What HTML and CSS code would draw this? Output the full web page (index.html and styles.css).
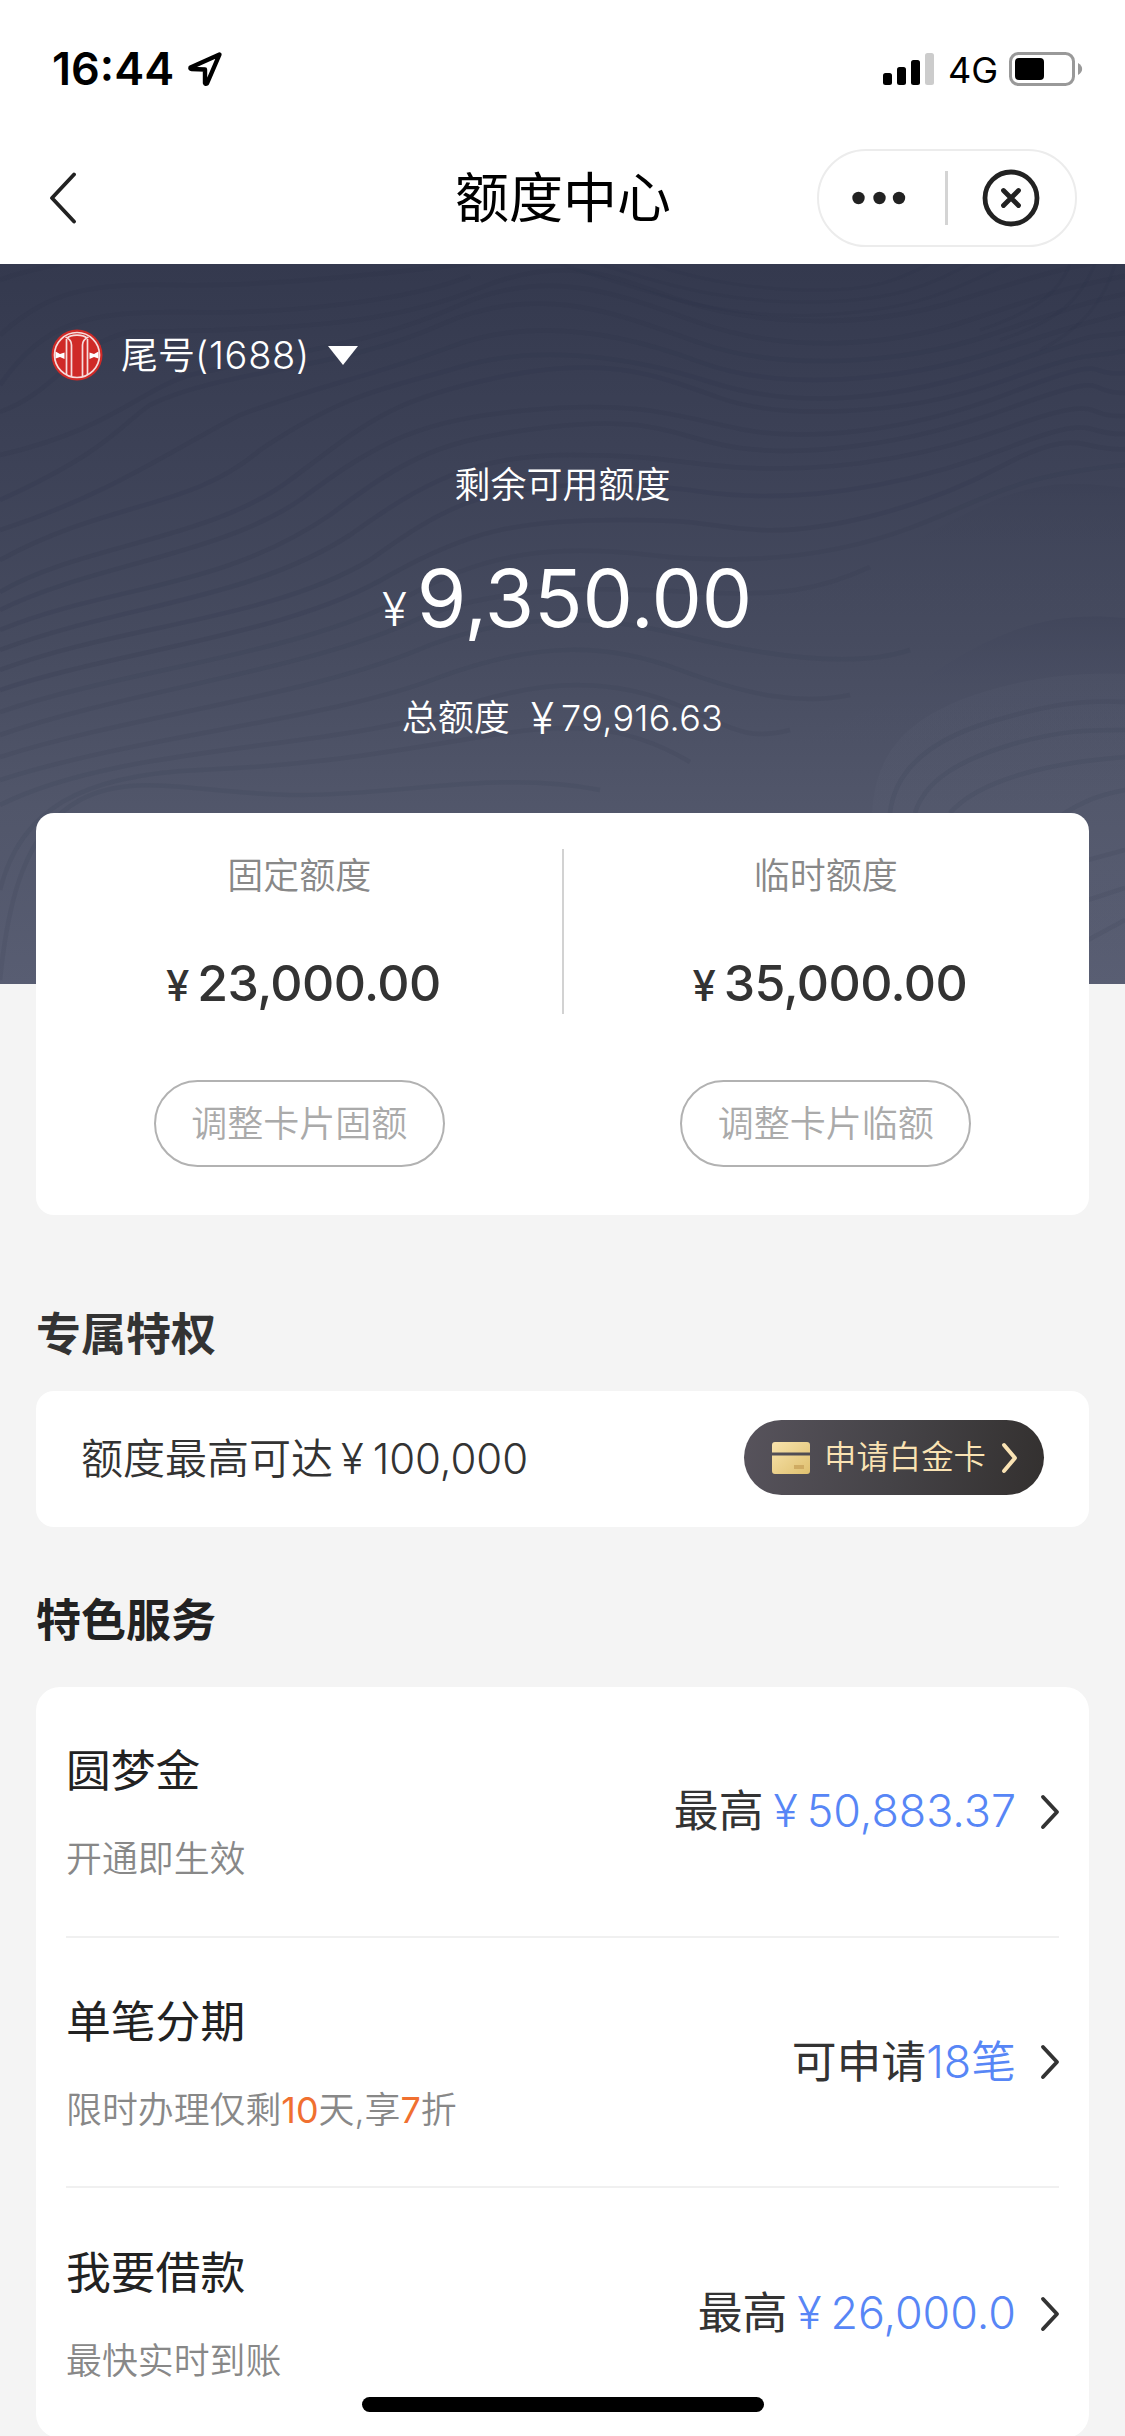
FILE: index.html
```html
<!DOCTYPE html>
<html lang="zh-CN">
<head>
<meta charset="utf-8">
<title>额度中心</title>
<link rel="stylesheet" href="styles.css">
</head>
<body>
<div class="screen">
  <header class="status">
    <div class="status-left">
      <span class="time">16:44</span>
      <svg class="loc" width="36" height="36" viewBox="0 0 36 36"><path d="M32.500 3.500 L3.500 16.500 Q3 18 4.500 18 L18 18.500 L18 32 Q18.500 33.500 20 32.500 Z" fill="none" stroke="#000" stroke-width="4.400" stroke-linejoin="round"/></svg>
    </div>
    <div class="status-right">
      <svg width="51" height="32" viewBox="0 0 51 32"><rect x="0" y="20" width="9" height="12" rx="2.5"/><rect x="14" y="14" width="9" height="18" rx="2.5"/><rect x="28" y="7" width="9" height="25" rx="2.5"/><rect x="42" y="0" width="9" height="32" rx="2.5" fill="#ccc"/></svg>
      <span class="net">4G</span>
      <svg width="74" height="34" viewBox="0 0 74 34"><rect x="1.5" y="1.5" width="63" height="31" rx="8" fill="none" stroke="#999" stroke-width="3"/><rect x="6" y="6" width="29" height="22" rx="4"/><path d="M69 11 C74.5 14 74.5 20 69 23 Z" fill="#999"/></svg>
    </div>
  </header>
  <nav class="nav">
    <svg class="back" width="28" height="52" viewBox="0 0 28 52"><path d="M25 2.5 L3 26 L25 49.500" fill="none" stroke="#222" stroke-width="3.8" stroke-linecap="round" stroke-linejoin="round"/></svg>
    <h1 class="title">额度中心</h1>
    <div class="capsule">
      <svg width="54" height="14" viewBox="0 0 54 14"><g fill="#222"><circle cx="6.500" cy="7" r="6.200"/><circle cx="27.500" cy="7" r="6.200"/><circle cx="47" cy="7" r="6.200"/></g></svg>
      <i class="cap-line"></i>
      <svg width="58" height="58" viewBox="0 0 58 58"><g fill="none" stroke="#222" stroke-width="4.800" stroke-linecap="round"><circle cx="29" cy="29" r="26"/><path d="M21.500 21.500 L36.500 36.500 M36.500 21.500 L21.500 36.500"/></g></svg>
    </div>
  </nav>

  <section class="hero">
    <svg class="waves" width="1125" height="720" viewBox="0 264 1125 720">
      <defs>
        <linearGradient id="hillA" x1="0" y1="0" x2="0" y2="1"><stop offset="0" stop-color="#3b4055" stop-opacity=".65"/><stop offset=".6" stop-color="#474c60" stop-opacity="0"/></linearGradient>
        <linearGradient id="hillB" x1="0" y1="0" x2="0" y2="1"><stop offset="0" stop-color="#40455a" stop-opacity=".7"/><stop offset=".6" stop-color="#50556a" stop-opacity="0"/></linearGradient>
        <linearGradient id="hillC" x1="0" y1="0" x2="0" y2="1"><stop offset="0" stop-color="#5b6074" stop-opacity=".15"/><stop offset="1" stop-color="#5b6074" stop-opacity=".3"/></linearGradient>
      </defs>
      <path fill="url(#hillA)" d="M740 600 C870 580 930 525 1000 498 C1050 480 1080 482 1125 488 V700 H700 Z"/>
      <path fill="url(#hillB)" d="M620 800 C760 760 850 725 930 675 C1010 622 1060 612 1125 618 V830 H620 Z"/>
      <path fill="url(#hillC)" d="M872 830 C870 760 900 725 960 700 C1020 677 1080 672 1125 674 V984 H860 Z"/>
      <g class="contours">
        <path d="M0 280 C20 272 40 268 60 264"/>
        <path d="M0 335 C50 290 90 283 180 285 S400 272 500 260"/>
        <path d="M0 385 C45 320 90 312 180 312 C290 315 410 300 470 276"/>
        <path d="M0 412 C60 390 70 345 130 332 C290 330 390 325 480 288 S620 280 680 300 S850 335 960 300 S1080 265 1125 258"/>
        <path d="M0 455 C110 430 140 390 190 375 C300 350 370 345 460 305 S620 295 700 323 S880 350 970 320 S1070 287 1125 276"/>
        <path d="M0 500 C110 450 120 425 150 405 C220 370 340 370 440 325 S620 315 700 343 S900 365 990 335 S1080 304 1125 294"/>
        <path d="M0 530 C110 495 180 445 240 415 C320 385 370 377 450 347 S620 332 700 362 S900 382 1000 350 S1080 325 1125 313"/>
        <path d="M0 560 C110 500 190 510 260 450 C350 390 390 388 460 367 S620 353 710 382 S900 400 1010 363 S1080 340 1125 333"/>
        <path d="M0 592 C80 545 210 540 290 480 C370 420 390 400 500 377 S660 377 720 398 S900 417 1000 382 S1080 360 1125 351"/>
        <path d="M0 610 C90 565 220 555 300 500 C380 440 420 420 530 410 S680 417 740 429 S900 435 1010 393 S1080 377 1125 373"/>
        <path d="M0 630 C110 585 220 590 330 515 C410 455 440 440 550 427 S680 440 740 448 S900 448 1010 408 S1080 393 1125 393"/>
        <path d="M0 650 C120 605 250 600 350 535 C420 485 470 455 570 455 S680 465 750 468 S910 462 1010 427 S1080 418 1125 416"/>
        <path d="M0 670 C120 625 270 620 370 560 C440 510 480 485 590 485 S690 495 760 496 S920 482 1010 447 S1080 435 1125 434"/>
        <path d="M0 690 C120 650 290 635 390 575 C470 530 520 520 620 520 S700 527 760 530 S920 510 1000 467 S1080 452 1125 449"/>
      </g>
      <g class="contours soft">
        <path d="M0 712 C130 668 300 655 410 595 C490 550 560 545 650 555 S830 558 910 528 S1010 476 1125 465"/>
        <path d="M0 735 C130 690 310 670 420 618 C500 585 600 587 690 592 S820 590 870 567"/>
        <path d="M0 757 C140 713 310 697 430 645 C520 612 600 615 680 635 S850 670 910 650"/>
        <path d="M0 780 C140 735 330 720 440 677 C540 640 610 644 680 670 S800 705 850 695"/>
        <path d="M0 805 C120 745 330 750 450 710 C550 675 620 680 680 706 S750 740 790 730"/>
        <path d="M0 890 C20 810 80 775 200 770 S400 750 480 737 S620 720 690 762"/>
        <path d="M0 980 C8 900 25 830 80 800 S200 795 300 795 S500 770 600 790"/>
        <path d="M890 813 C895 770 930 740 990 722 S1080 700 1125 702"/>
        <path d="M915 813 C925 780 960 760 1010 745 S1090 730 1125 730"/>
        <path d="M950 813 C970 790 1020 765 1125 757"/>
        <path d="M1040 830 C1080 800 1100 795 1125 790"/>
        <path d="M1088 940 L1125 920 M1088 900 L1125 888 M1088 860 L1125 850"/>
      </g>
      <g class="contours dense">
        <path d="M560 264 C640 290 720 320 820 315 S950 290 1010 264"/>
        <path d="M600 264 C680 290 740 304 820 302 S930 284 970 264"/>
        <path d="M650 264 C710 283 760 290 820 290 S900 278 930 264"/>
        <path d="M980 330 C1040 310 1060 290 1070 264"/>
        <path d="M1000 340 C1060 320 1080 300 1095 264"/>
        <path d="M1040 350 C1080 330 1105 300 1115 264"/>
      </g>
    </svg>
    <div class="account">
      <svg width="52" height="52" viewBox="0 0 52 52"><circle cx="26" cy="26" r="25.500" fill="#cf2a27"/><g fill="none" stroke="#f6dcdc" stroke-width="1.700"><circle cx="26" cy="26" r="22.500"/><path d="M14.500 8 C19 10 20.500 12 20.500 16 V47.500 M37.500 8 C33 10 31.500 12 31.500 16 V47.500 M15.500 10 V46 M36.500 10 V46 M16 9.500 C19 5 33 5 36 9.500"/></g><path d="M4.500 22.500 L9 25 L13.500 23.500 V30 L9 28 L4.500 29.500 Z M47.500 22.500 L43 25 L38.500 23.500 V30 L43 28 L47.500 29.500 Z" fill="#fff"/></svg>
      <span class="tail">尾号<b>(1688)</b></span>
      <svg class="tri" width="30" height="19" viewBox="0 0 30 19"><path d="M0 0 H30 L15 19 Z" fill="#fff"/></svg>
    </div>
    <div class="avail-label">剩余可用额度</div>
    <div class="avail"><span class="yen">¥</span><span class="big">9,350.00</span></div>
    <div class="total"><span>总额度</span><span class="yen">¥</span><span class="sum">79,916.63</span></div>
  </section>

  <section class="limits">
    <div class="limit">
      <div class="limit-label">固定额度</div>
      <div class="limit-amt"><span class="yen">¥</span><span>23,000.00</span></div>
      <div class="limit-btn">调整卡片固额</div>
    </div>
    <i class="limit-line"></i>
    <div class="limit">
      <div class="limit-label">临时额度</div>
      <div class="limit-amt"><span class="yen">¥</span><span>35,000.00</span></div>
      <div class="limit-btn">调整卡片临额</div>
    </div>
  </section>

  <h2 class="sec sec-a">专属特权</h2>
  <section class="vip">
    <div class="vip-text"><span>额度最高可达</span><span class="yen">¥</span><span class="sum">100,000</span></div>
    <div class="vip-btn">
      <svg width="38" height="32" viewBox="0 0 38 32"><defs><linearGradient id="gold" x1="0" y1="0" x2="1" y2="1"><stop offset="0" stop-color="#f8e3ac"/><stop offset="1" stop-color="#dfc06f"/></linearGradient></defs><path d="M0 10.500 V3 Q0 0 3 0 H35 Q38 0 38 3 V10.500 Z M0 13.500 H38 V29 Q38 32 35 32 H3 Q0 32 0 29 Z" fill="url(#gold)"/><rect x="22" y="23" width="10" height="4" fill="#cfab62"/></svg>
      <span>申请白金卡</span>
      <svg width="18" height="32" viewBox="0 0 18 32"><path d="M3 3 L14 16 L3 29" fill="none" stroke="#fae3b4" stroke-width="4" stroke-linecap="round" stroke-linejoin="round"/></svg>
    </div>
  </section>

  <h2 class="sec sec-b">特色服务</h2>
  <section class="services">
    <div class="row">
      <div class="row-main"><div class="row-title">圆梦金</div><div class="row-sub">开通即生效</div></div>
      <div class="row-value"><span>最高</span><span class="blue yen">¥</span><span class="blue">50,883.37</span></div>
      <svg class="chev" width="20" height="36" viewBox="0 0 20 36"><path d="M3 3 L17 18 L3 33" fill="none" stroke="#333" stroke-width="3.900" stroke-linecap="round" stroke-linejoin="round"/></svg>
    </div>
    <div class="row">
      <div class="row-main"><div class="row-title">单笔分期</div><div class="row-sub">限时办理仅剩<em>10</em>天,享<em>7</em>折</div></div>
      <div class="row-value"><span>可申请</span><span class="blue">18笔</span></div>
      <svg class="chev" width="20" height="36" viewBox="0 0 20 36"><path d="M3 3 L17 18 L3 33" fill="none" stroke="#333" stroke-width="3.900" stroke-linecap="round" stroke-linejoin="round"/></svg>
    </div>
    <div class="row">
      <div class="row-main"><div class="row-title">我要借款</div><div class="row-sub">最快实时到账</div></div>
      <div class="row-value"><span>最高</span><span class="blue yen">¥</span><span class="blue">26,000.0</span></div>
      <svg class="chev" width="20" height="36" viewBox="0 0 20 36"><path d="M3 3 L17 18 L3 33" fill="none" stroke="#333" stroke-width="3.900" stroke-linecap="round" stroke-linejoin="round"/></svg>
    </div>
  </section>
  <div class="home"></div>
</div>
</body>
</html>
```
FILE: styles.css
```css
* { box-sizing: border-box; margin: 0; padding: 0; }
html, body { width: 1125px; height: 2436px; overflow: hidden; }
body { background: #f4f4f4; font-family: Inter, "Noto Sans CJK SC", sans-serif; color: #333; }
svg { display: block; flex: none; }
i, em, b { font-style: normal; font-weight: inherit; }
.screen { position: relative; width: 1125px; height: 2436px; overflow: hidden; white-space: nowrap; }

.status { height: 138px; background: #fff; display: flex; align-items: center; justify-content: space-between; padding: 0 42px 0 52px; }
.status-left, .status-right { display: flex; align-items: center; }
.time { font-size: 45px; line-height: 60px; font-weight: 600; color: #000; width: 124px; }
.loc { margin-left: 11px; }
.net { font-size: 36px; line-height: 60px; color: #000; font-weight: 400; width: 49px; margin: 2px 12px 0 14px; }

.nav { height: 126px; background: #fff; display: flex; align-items: flex-start; padding: 8px 48px 0 49px; }
.back { margin-top: 26px; }
.title { flex: 1; font-size: 54px; line-height: 106px; font-weight: 400; color: #000; text-align: center; padding-left: 232px; }
.capsule { margin-top: 3px; width: 260px; height: 98px; border: 2px solid #ececec; border-radius: 49px; display: flex; align-items: center; padding: 0 35px 0 33px; justify-content: space-between; }
.cap-line { width: 3px; height: 54px; background: #d4d4d4; margin-left: 4px; }

.hero { position: relative; height: 720px; background: linear-gradient(#34394e 0%, #3d4257 28%, #464b5f 52%, #51566a 75%, #585d72 100%); color: #fff; display: flex; flex-direction: column; align-items: center; }
.waves { position: absolute; left: 0; top: 0; }
.contours { fill: none; stroke: #2b3047; stroke-opacity: .18; stroke-width: 4.5; }
.soft { stroke-opacity: .1; }
.dense { stroke-opacity: .14; stroke-width: 3; }
.account, .avail-label, .avail, .total { position: relative; }
.account { align-self: stretch; display: flex; align-items: center; height: 60px; margin-top: 61px; padding-left: 51px; }
.tail { font-size: 37px; line-height: 60px; font-weight: 350; margin-left: 18px; width: 188px; }
.tail b { font-size: 38px; letter-spacing: .7px; }
.tri { margin-left: 19px; }
.avail-label { font-size: 36px; line-height: 50px; margin-top: 75px; font-weight: 350; }
.avail { display: flex; height: 90px; margin-top: 37px; align-items: flex-start; padding-left: 9px; }
.avail .yen { font-size: 46px; line-height: 50px; margin-top: 37px; margin-right: 10px; font-weight: 350; }
.big { font-size: 80px; line-height: 90px; font-weight: 400; letter-spacing: -.2px; margin-top: 6px; }
.total { display: flex; align-items: center; font-size: 36px; line-height: 50px; margin-top: 56px; font-weight: 350; }
.total .yen { margin-left: 21px; margin-right: 7px; font-weight: 350; font-size: 43px; }
.total .sum { letter-spacing: .3px; }

.limits { position: relative; margin: -171px 36px 0; height: 402px; background: #fff; border-radius: 18px; display: flex; }
.limit { flex: 1; display: flex; flex-direction: column; align-items: center; padding-top: 38px; }
.limit-line { width: 2px; height: 165px; margin: 36px -1px 0; background: #d2d2d2; }
.limit-label { font-size: 36px; line-height: 50px; color: #888; font-weight: 350; }
.limit-amt { display: flex; margin-top: 52px; height: 60px; line-height: 60px; font-size: 50px; font-weight: 500; padding-left: 8px; letter-spacing: -.6px; }
.limit-amt .yen { font-size: 42px; margin: 3px 8px 0 0; letter-spacing: 0; }
.limit-btn { margin-top: 67px; width: 291px; height: 87px; border: 2px solid #b2b2b2; border-radius: 44px; font-size: 36px; line-height: 84px; color: #aaa; text-align: center; font-weight: 350; }

.sec { margin-left: 36px; font-size: 45px; line-height: 60px; font-weight: 600; }
.sec-a { margin-top: 90px; }
.vip { margin: 26px 36px 0; height: 136px; border-radius: 18px; background: #fff; display: flex; align-items: center; justify-content: space-between; padding: 0 45px; }
.vip-text { display: flex; font-size: 42px; line-height: 60px; font-weight: 350; }
.vip-text .yen { margin-left: 8px; margin-right: 9px; }
.vip-text .sum { letter-spacing: -.1px; }
.vip-btn { width: 300px; height: 75px; border-radius: 38px; background: linear-gradient(100deg, #57535c 0%, #454347 50%, #33302f 100%); color: #fae3b4; display: flex; align-items: center; padding-left: 28px; margin-top: -3px; }
.vip-btn span { font-size: 32.400px; line-height: 60px; margin: 1px 15px 0 14px; font-weight: 350; }
.sec-b { margin-top: 64px; color: #222; }

.services { margin: 36px 36px 0; height: 751px; background: #fff; border-radius: 24px; padding: 0 30px; }
.row { height: 250.500px; display: flex; align-items: center; border-bottom: 2px solid #f0f0f0; }
.row:last-child { border-bottom: 0; }
.row-main { flex: 1; }
.row-title { font-size: 44.800px; line-height: 60px; color: #222; font-weight: 400; margin-top: 3px; }
.row-sub { font-size: 35.900px; line-height: 50px; color: #888; font-weight: 350; margin-top: 33px; }
.row-sub em { color: #f07030; font-weight: 400; }
.row-value { display: flex; font-size: 44.800px; line-height: 60px; }
.blue { color: #5786f6; font-weight: 350; letter-spacing: 0; }
.row-value .yen { margin: 0 9px 0 10px; }
.chev { margin-left: 24px; margin-right: -1px; margin-top: 1px; }

.home { position: absolute; left: 362px; top: 2397px; width: 402px; height: 15px; border-radius: 8px; background: #000; }
```
